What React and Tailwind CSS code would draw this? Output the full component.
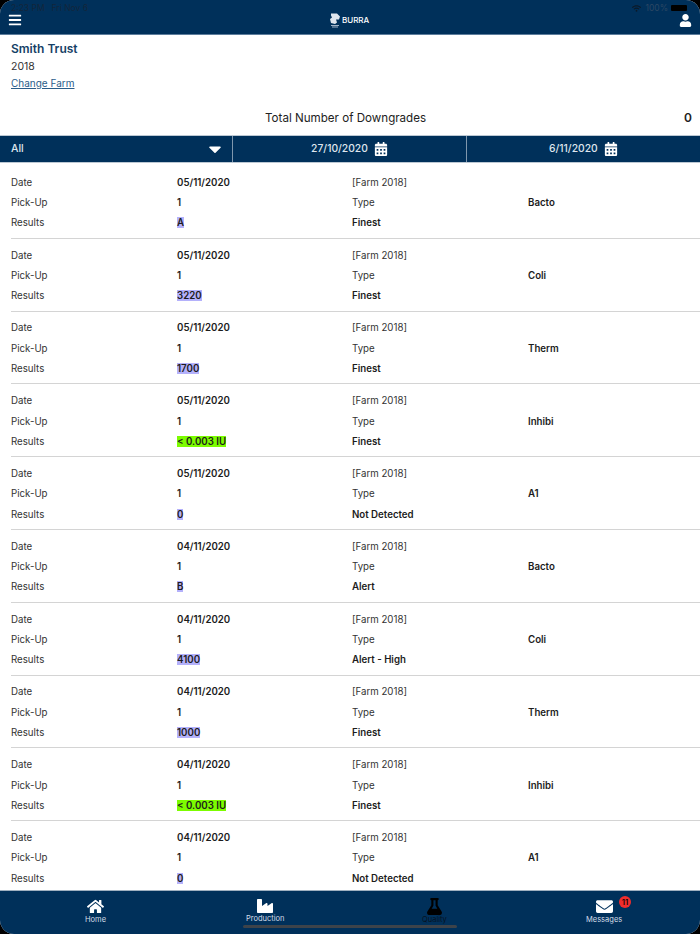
import { FaBars, FaUser, FaCalendarAlt, FaCaretDown, FaHome, FaIndustry, FaFlask, FaEnvelope, FaWifi } from 'react-icons/fa';

const rows = [
  { date: '05/11/2020', type: 'Bacto', result: 'A', grade: 'Finest', mark: 'blue' },
  { date: '05/11/2020', type: 'Coli', result: '3220', grade: 'Finest', mark: 'blue' },
  { date: '05/11/2020', type: 'Therm', result: '1700', grade: 'Finest', mark: 'blue' },
  { date: '05/11/2020', type: 'Inhibi', result: '< 0.003 IU', grade: 'Finest', mark: 'green' },
  { date: '05/11/2020', type: 'A1', result: '0', grade: 'Not Detected', mark: 'blue' },
  { date: '04/11/2020', type: 'Bacto', result: 'B', grade: 'Alert', mark: 'blue' },
  { date: '04/11/2020', type: 'Coli', result: '4100', grade: 'Alert - High', mark: 'blue' },
  { date: '04/11/2020', type: 'Therm', result: '1000', grade: 'Finest', mark: 'blue' },
  { date: '04/11/2020', type: 'Inhibi', result: '< 0.003 IU', grade: 'Finest', mark: 'green' },
  { date: '04/11/2020', type: 'A1', result: '0', grade: 'Not Detected', mark: 'blue' },
];

const Row = ({ row, last }) => (
  <div className={`ml-[11px] h-[72.8px] pt-[7px] grid grid-cols-[166px_175px_176px_1fr] grid-rows-[20.3px_20.3px_20.3px] items-center text-[9.7px] text-[#333] ${last ? '' : 'border-b border-[#d4d4d4]'}`}>
    <span>Date</span>
    <span className="font-semibold text-[#1c1c1c]">{row.date}</span>
    <span>[Farm 2018]</span>
    <span />
    <span>Pick-Up</span>
    <span className="font-semibold text-[#1c1c1c]">1</span>
    <span>Type</span>
    <span className="font-semibold text-[#1c1c1c]">{row.type}</span>
    <span>Results</span>
    <span className="font-semibold text-[#1c1c1c]">
      <span className={row.mark === 'green' ? 'bg-[#7cfc00]' : 'bg-[#b4b1fb]'}>{row.result}</span>
    </span>
    <span className="font-semibold text-[#1c1c1c]">{row.grade}</span>
    <span />
  </div>
);

const DateCell = ({ value, border }) => (
  <div className={`flex items-center justify-center gap-[6px] text-[10.3px] font-medium text-[#dfe6ee] ${border ? 'border-r border-[#7f97ad]' : ''}`}>
    <span>{value}</span>
    <FaCalendarAlt className="text-[14px] text-white" />
  </div>
);

const Tab = ({ icon, label, dark, className }) => (
  <div className={`flex flex-col items-center ${dark ? 'text-black' : 'text-white'} ${className}`}>
    {icon}
    <span className={`text-[7.5px] leading-[9px] ${dark ? 'text-[#06121f]' : 'text-[#d5dee8]'}`}>{label}</span>
  </div>
);

export default function App() {
  return (
    <div className="h-[934px] w-[700px] bg-black font-['Inter',sans-serif]">
      <div className="relative flex h-full flex-col overflow-hidden rounded-[14px] bg-white">
        {/* Header, status bar sits over it */}
        <header className="relative flex h-[35px] shrink-0 items-end justify-between border-b border-[#5d7d9c] bg-[#00305a] px-[8px] pb-[7px]">
          <div className="absolute inset-x-[11px] top-[3px] flex items-center justify-between text-[8.5px] leading-[10px] text-[#13263a]">
            <span className="flex gap-[7px]"><span>2:23 PM</span><span>Fri Nov 6</span></span>
            <span className="flex items-center gap-[3px] pr-[2px]">
              <FaWifi className="text-[9px] text-[#0b1a29]" />
              <span className="ml-[1px] text-[#2b4764]">100%</span>
              <span className="h-[6px] w-[16px] rounded-[1px] bg-black" />
            </span>
          </div>
          <FaBars className="text-[14px] text-white" />
          <div className="absolute left-[329px] top-[12px] flex items-center gap-[1px]">
            <svg width="12" height="16" viewBox="0 0 12 16">
              <path d="M2 1.5h6l3 3-1 3H7l1 3-2 1.5-4-1-1-4 2-1.5-1-2z" fill="#dfe6ee" />
              <path d="M2 13.5h8M3 15h6" stroke="#9fb2c6" strokeWidth="1" />
            </svg>
            <span className="text-[8px] font-medium leading-none text-white">BURRA</span>
          </div>
          <FaUser className="text-[13px] text-white" />
        </header>

        {/* Farm details */}
        <div className="h-[100px] shrink-0 pl-[11px] pr-[8px] pt-[6px]">
          <div className="text-[12px] font-semibold leading-[16px] text-[#153f66]">Smith Trust</div>
          <div className="mt-[2px] text-[10.5px] leading-[15px] text-[#333]">2018</div>
          <div className="mt-[2px] text-[10px] leading-[15px] text-[#2a5d8a] underline">Change Farm</div>
          <div className="mt-[19px] flex items-center text-[11.6px] leading-[16px] text-[#222]">
            <span className="flex-1 pl-[254px]">Total Number of Downgrades</span>
            <span className="text-[12px] font-semibold">0</span>
          </div>
        </div>

        {/* Filter bar */}
        <div className="grid h-[28px] shrink-0 grid-cols-3 border-y border-[#bcc8d3] bg-[#00305a]">
          <div className="flex items-center justify-between border-r border-[#7f97ad] pl-[11px] pr-[7px] text-[10.5px] font-medium text-[#dfe6ee]">
            <span>All</span>
            <FaCaretDown className="text-[20px] text-white" />
          </div>
          <DateCell value="27/10/2020" border />
          <DateCell value="6/11/2020" />
        </div>

        {/* Results list */}
        <div className="flex-1 overflow-hidden pt-[3px]">
          {rows.map((row, i) => (
            <Row key={i} row={row} last={i === rows.length - 1} />
          ))}
        </div>

        {/* Tab bar */}
        <nav className="relative flex h-[44px] shrink-0 justify-around border-t border-[#9fb0c0] bg-[#00305a] pt-[7px]">
          <Tab icon={<FaHome className="text-[17px]" />} label="Home" className="absolute left-[85px]" />
          <Tab icon={<FaIndustry className="text-[16px]" />} label="Production" className="absolute left-[246px]" />
          <Tab icon={<FaFlask className="text-[17px]" />} dark label="Quality" className="absolute left-[422px]" />
          <Tab icon={<FaEnvelope className="text-[17px]" />} label="Messages" className="absolute left-[586px]" />
          <span className="absolute left-[619px] top-[5px] flex h-[12px] w-[12px] items-center justify-center rounded-full bg-[#f02d2d] text-[8px] font-medium text-black">11</span>
          <span className="absolute left-[243px] top-[34px] h-[3px] w-[214px] rounded-full bg-[#3d434a]" />
        </nav>
      </div>
    </div>
  );
}
